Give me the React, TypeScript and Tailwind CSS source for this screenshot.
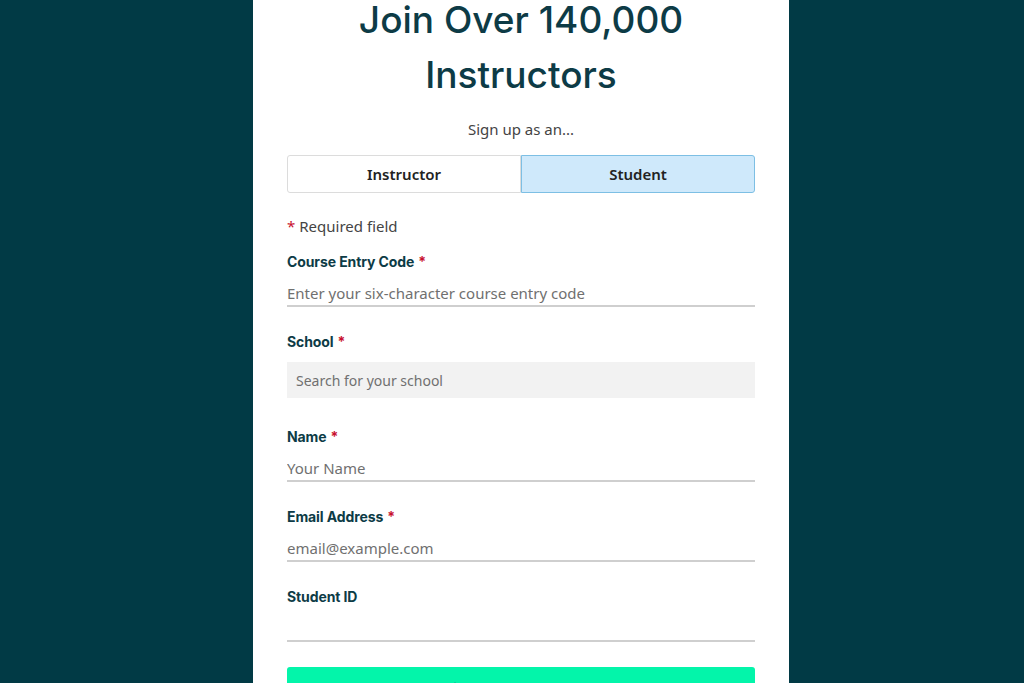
import React from 'react'

const heading = { fontFamily: 'Inter, "Noto Sans", sans-serif' }
const body = { fontFamily: '"Noto Sans", "Open Sans", sans-serif' }

const Req = () => <span className="text-[#c8102e] ml-1">*</span>

const Label: React.FC<{ text: string; required?: boolean }> = ({ text, required }) => (
  <label style={heading} className="block h-5 text-[14px] leading-5 font-bold text-[#0d3b46] tracking-[-0.1px]">
    {text}
    {required && <Req />}
  </label>
)

const LineInput: React.FC<{ placeholder: string }> = ({ placeholder }) => (
  <input
    style={body}
    placeholder={placeholder}
    className="mt-[9px] block w-full h-[26px] border-b-2 border-[#cfcfcf] bg-transparent text-[15px] text-[#333] placeholder:text-[#707070] outline-none"
  />
)

const App: React.FC = () => {
  return (
    <div className="h-[683px] overflow-hidden bg-[#013a45] flex justify-center pl-[18px]">
      <div className="w-[536px] h-full bg-white px-[34px]">
        <h1 style={heading} className="text-center text-[37px] font-medium text-[#0d3b46] tracking-[0px]">
          <span className="block leading-[40px]">Join Over 140,000</span>
          <span className="block mt-[15px] leading-[40px]">Instructors</span>
        </h1>

        <p style={body} className="mt-[24px] text-center text-[15px] leading-5 text-[#444]">
          Sign up as an...
        </p>

        <div style={body} className="mt-4 grid grid-cols-2 h-[38px] text-[15px] font-semibold text-[#222]">
          <button className="border border-[#dcdcdc] rounded-l-[3px] bg-white">Instructor</button>
          <button className="border border-[#7dbfe4] rounded-r-[3px] bg-[#cfe9fb]">Student</button>
        </div>

        <p style={body} className="mt-[23px] text-[15px] leading-5 text-[#444]">
          <span className="text-[#c8102e] mr-1">*</span>Required field
        </p>

        <form className="mt-4">
          <Label text="Course Entry Code" required />
          <LineInput placeholder="Enter your six-character course entry code" />

          <div className="mt-[25px]">
            <Label text="School" required />
            <input
              style={body}
              placeholder="Search for your school"
              className="mt-[10px] block w-full h-9 px-[9px] bg-[#f2f2f2] text-[14px] text-[#333] placeholder:text-[#707070] outline-none"
            />
          </div>

          <div className="mt-[29px]">
            <Label text="Name" required />
            <LineInput placeholder="Your Name" />
          </div>

          <div className="mt-[25px]">
            <Label text="Email Address" required />
            <LineInput placeholder="email@example.com" />
          </div>

          <div className="mt-[25px]">
            <Label text="Student ID" />
            <LineInput placeholder="" />
          </div>

          <button
            type="button"
            style={heading}
            className="mt-[25px] w-full h-11 rounded-[3px] bg-[#03f5aa] text-[16px] font-semibold text-[#0d3b46]"
          >
            Sign up as a student
          </button>
        </form>
      </div>
    </div>
  )
}

export default App
